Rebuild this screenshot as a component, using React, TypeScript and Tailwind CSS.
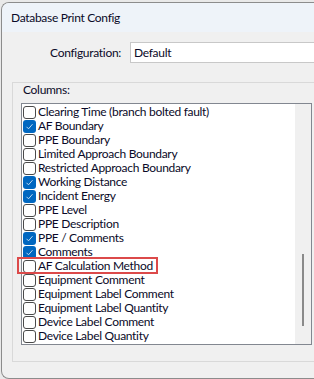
import React from 'react';

const columns: { label: string; checked: boolean }[] = [
  { label: 'Clearing Time (branch bolted fault)', checked: false },
  { label: 'AF Boundary', checked: true },
  { label: 'PPE Boundary', checked: false },
  { label: 'Limited Approach Boundary', checked: false },
  { label: 'Restricted Approach Boundary', checked: false },
  { label: 'Working Distance', checked: true },
  { label: 'Incident Energy', checked: true },
  { label: 'PPE Level', checked: false },
  { label: 'PPE Description', checked: false },
  { label: 'PPE / Comments', checked: true },
  { label: 'Comments', checked: true },
  { label: 'AF Calculation Method', checked: false },
  { label: 'Equipment Comment', checked: false },
  { label: 'Equipment Label Comment', checked: false },
  { label: 'Equipment Label Quantity', checked: false },
  { label: 'Device Label Comment', checked: false },
  { label: 'Device Label Quantity', checked: false },
];

const CheckBox: React.FC<{ checked: boolean }> = ({ checked }) =>
  checked ? (
    <span className="flex w-[13px] h-[13px] shrink-0 items-center justify-center rounded-[3px] bg-[#0067c0]">
      <svg width="9" height="9" viewBox="0 0 9 9" fill="none">
        <path d="M1.5 4.8 L3.5 6.8 L7.5 2.2" stroke="#cfe3f5" strokeWidth="0.9" />
      </svg>
    </span>
  ) : (
    <span className="w-[13px] h-[13px] shrink-0 rounded-[3px] border border-[#4a4a4a] bg-white" />
  );

export default function App() {
  return (
    <div className="w-[314px] h-[379px] overflow-hidden bg-[#e9e9e9] pt-[2px] font-['Lato',sans-serif] text-[12px] tracking-[-0.3px] text-[#0a0a28]">
      <div className="ml-[1px] w-[330px] h-[377px] rounded-tl-[8px] rounded-bl-[8px] border-l border-t border-b border-[#8c8c8c] bg-[#f0f0f0] overflow-hidden">
        <div className="h-[29px] bg-[#eef3f9] pl-[9px] flex items-center">Database Print Config</div>

        <div className="mt-[10px] flex items-center">
          <span className="w-[119px] text-right whitespace-nowrap">Configuration:</span>
          <div className="ml-[9px] flex-1 h-[21px] border border-[#c8c8c8] bg-white pl-[3px] flex items-center">Default</div>
        </div>

        <div className="relative mt-[19px] ml-[10px] h-[280px] border border-[#d9d9d9] pl-[8px]">
          <div className="pl-[2px] leading-[14px]">Columns:</div>
          <div className="mt-[6px] w-[291px] h-[242px] border border-[#828790] bg-white flex">
            <div className="flex-1 pl-[1px] pt-[1px]">
              {columns.map((c) => (
                <div key={c.label} className="h-[14px] flex items-center gap-[2px] whitespace-nowrap leading-[14px]">
                  <CheckBox checked={c.checked} />
                  <span>{c.label}</span>
                </div>
              ))}
            </div>
            <div className="w-[16px] bg-[#f0f0f0] flex justify-center">
              <div className="mt-[150px] w-[2px] h-[72px] bg-[#8a8a8a]" />
            </div>
          </div>
          <div className="absolute left-[4px] top-[174px] w-[141px] h-[17px] border-2 border-[#dc4a4a]" />
        </div>
      </div>
    </div>
  );
}
